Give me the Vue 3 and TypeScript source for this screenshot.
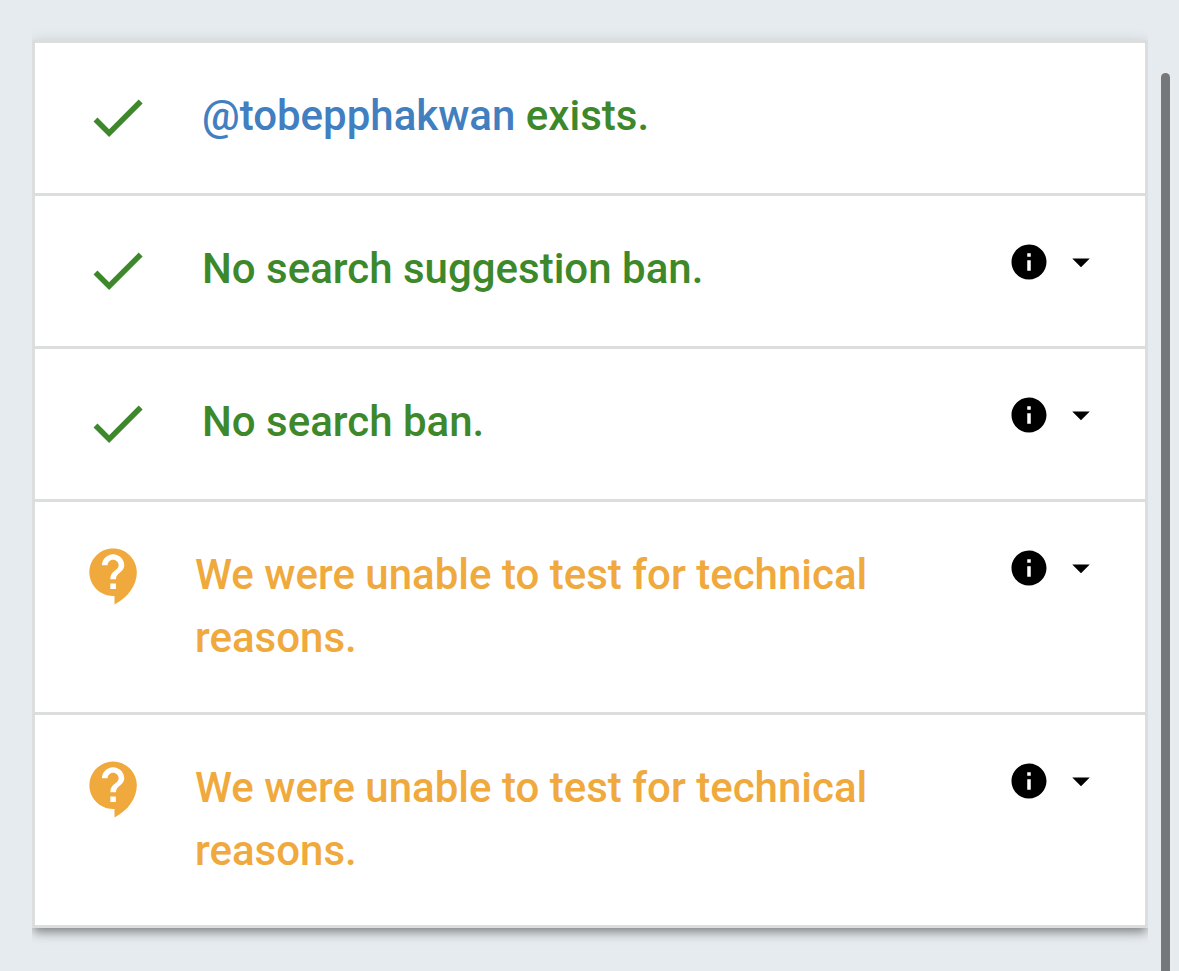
<script setup lang="ts">
type Status = 'pass' | 'unknown'

interface Check {
  id: number
  status: Status
  handle?: string
  text: string
  details: boolean
}

const checks: Check[] = [
  { id: 1, status: 'pass', handle: '@tobepphakwan', text: 'exists.', details: false },
  { id: 2, status: 'pass', text: 'No search suggestion ban.', details: true },
  { id: 3, status: 'pass', text: 'No search ban.', details: true },
  { id: 4, status: 'unknown', text: 'We were unable to test for technical reasons.', details: true },
  { id: 5, status: 'unknown', text: 'We were unable to test for technical reasons.', details: true },
]
</script>

<template>
  <div class="page">
    <main class="content">
      <ul class="card">
        <li v-for="check in checks" :key="check.id" class="row" :class="check.status">
          <svg v-if="check.status === 'pass'" class="status" viewBox="0 0 24 24" aria-hidden="true">
            <path d="M9 16.17L4.83 12l-1.42 1.41L9 19 21 7l-1.41-1.41z" />
          </svg>
          <svg v-else class="status" viewBox="0 0 24 24" aria-hidden="true">
            <path
              d="M11.5 2C6.81 2 3 5.81 3 10.5S6.81 19 11.5 19h.5v3c4.86-2.34 8-7 8-11.5C20 5.81 16.19 2 11.5 2zm1 14.5h-2v-2h2v2zm0-3.5h-2c0-3.25 3-3 3-5 0-1.1-.9-2-2-2s-2 .9-2 2h-2c0-2.21 1.79-4 4-4s4 1.79 4 4c0 2.5-3 2.75-3 5z"
            />
          </svg>
          <p class="message">
            <template v-if="check.handle"><a href="#">{{ check.handle }}</a>{{ ' ' }}</template>{{ check.text }}
          </p>
          <button v-if="check.details" class="details" type="button" aria-label="Details">
            <svg viewBox="0 0 24 24" aria-hidden="true">
              <path d="M12 2C6.48 2 2 6.48 2 12s4.48 10 10 10 10-4.48 10-10S17.52 2 12 2zm1 15h-2v-6h2v6zm0-8h-2V7h2v2z" />
            </svg>
            <svg viewBox="0 0 24 24" aria-hidden="true">
              <path d="M7 10l5 5 5-5z" />
            </svg>
          </button>
        </li>
      </ul>
    </main>
    <div class="scrollbar" aria-hidden="true"></div>
  </div>
</template>

<style>
body {
  margin: 0;
  background: #e6ebef;
}
</style>

<style scoped>
.page {
  display: flex;
  min-height: 100vh;
  font-family: Roboto, "Liberation Sans", sans-serif;
}

.content {
  flex: 1;
  min-width: 0;
  padding: 40px 0 40px 32px;
}

.card {
  margin: 0;
  padding: 0;
  list-style: none;
  background: #fff;
  border: 3px solid #dcdddd;
  box-shadow:
    0 6px 9px -2px rgba(0, 0, 0, 0.36),
    0 3px 15px rgba(0, 0, 0, 0.14);
  clip-path: inset(-30px 0);
}

.row {
  display: flex;
  align-items: flex-start;
  gap: 51px;
  padding: 41px 43px 43px 49px;
}

.row + .row {
  border-top: 3px solid #dcdddd;
}

.row.unknown {
  gap: 47px;
  padding-left: 46px;
}

.status {
  flex: none;
  width: 67px;
  height: 67px;
  margin-bottom: -1px;
  fill: currentColor;
}

.message {
  flex: 1;
  margin: 0;
  font-size: 42px;
  font-weight: 500;
  line-height: 63px;
}

.message a {
  color: #417fc0;
  text-decoration: none;
}

.pass {
  color: #3c882b;
}

.unknown {
  color: #f0a93c;
}

.details {
  flex: none;
  display: flex;
  gap: 10px;
  margin-top: 4px;
  padding: 0;
  border: 0;
  background: none;
  color: #000;
  cursor: pointer;
}

.details svg {
  width: 42px;
  height: 42px;
  fill: currentColor;
}

.scrollbar {
  flex: none;
  width: 9px;
  margin: 73px 9px 0 13px;
  border-radius: 5px 5px 0 0;
  background: #757779;
}
</style>
